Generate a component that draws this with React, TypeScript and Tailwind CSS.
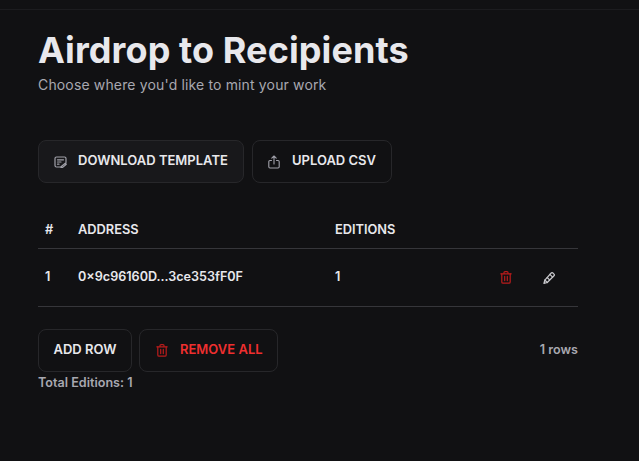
function NoteIcon() {
  return (
    <svg width="13" height="12" viewBox="0 0 13 12" fill="none" stroke="currentColor" strokeWidth="1.2" strokeLinecap="round" strokeLinejoin="round">
      <path d="M6.500 11H2.500A1.500 1.500 0 0 1 1 9.500v-7A1.500 1.500 0 0 1 2.500 1h8A1.500 1.500 0 0 1 12 2.500v4" />
      <path d="M3.500 3.800h6M3.500 6h3.500M3.500 8.200h1.500" />
      <path d="M7 10.800l4.300-3.600 1 1-3.600 3.200H7z" />
    </svg>
  );
}

function ShareIcon() {
  return (
    <svg width="12" height="14" viewBox="0 0 12 14" fill="none" stroke="currentColor" strokeWidth="1.1" strokeLinecap="round" strokeLinejoin="round">
      <path d="M3.500 5.500H2a1.200 1.200 0 0 0-1.200 1.200v5.100A1.200 1.200 0 0 0 2 13h8a1.200 1.200 0 0 0 1.200-1.200V6.700A1.200 1.200 0 0 0 10 5.500H8.500" />
      <path d="M6 9V1M3.800 3.200 6 1l2.200 2.200" />
    </svg>
  );
}

function TrashIcon() {
  return (
    <svg width="12" height="13" viewBox="0 0 12 13" fill="none" stroke="currentColor" strokeWidth="1.2" strokeLinecap="round" strokeLinejoin="round">
      <path d="M.8 2.800h10.400" />
      <path d="M4 2.600V1.600a1 1 0 0 1 1-1h2a1 1 0 0 1 1 1v1" />
      <path d="M1.800 2.800v8.100a1.300 1.300 0 0 0 1.300 1.300h5.800a1.300 1.300 0 0 0 1.300-1.300V2.800" />
      <path d="M4.700 5.400v4.200M7.300 5.400v4.200" />
    </svg>
  );
}

function PencilIcon() {
  return (
    <svg width="12" height="12" viewBox="0 0 13 13" fill="none" stroke="currentColor" strokeWidth="1.3" strokeLinecap="round" strokeLinejoin="round">
      <path d="M8.900 1.100a1.300 1.300 0 0 1 1.800 0l1.200 1.200a1.300 1.300 0 0 1 0 1.800L4.600 11.400l-3.600 1 1-3.700z" />
      <path d="M7.400 2.600l3 3M2 8.700l2.600 2.700M4.600 6l2.500 2.500" />
    </svg>
  );
}

export default function App() {
  return (
    <div className="h-[461px] w-[639px] overflow-hidden bg-[#111113] font-['Inter',sans-serif] text-[#e8e8ec]">
      <div className="h-[10px] border-b border-[#1c1c1f]" />

      <div className="pl-[38px] pr-[61px] pt-[15px]">
        <h1 className="text-[36px] font-bold leading-[50px] tracking-[0.1px]">Airdrop to Recipients</h1>
        <p className="text-sm leading-[20px] tracking-[0.15px] text-[#a8a8b0]">Choose where you'd like to mint your work</p>

        {/* Template buttons */}
        <div className="mt-[45px] flex gap-2">
          <button className="flex h-[43px] w-[206px] items-center gap-[11px] rounded-lg border border-[#27272a] bg-[#18181b] pl-[15px] text-[13px] font-semibold">
            <span className="text-[#a1a1aa]"><NoteIcon /></span>
            <span className="mb-[2px]">DOWNLOAD TEMPLATE</span>
          </button>
          <button className="flex h-[43px] w-[140px] items-center gap-[12px] rounded-lg border border-[#27272a] pl-[15px] text-[13px] font-semibold">
            <span className="text-[#a1a1aa]"><ShareIcon /></span>
            <span className="mb-[2px]">UPLOAD CSV</span>
          </button>
        </div>

        {/* Recipients table */}
        <div className="mt-[26px] font-semibold">
          <div className="flex h-[40px] items-center border-b border-[#36363a] pt-[2px] text-[12.800px]">
            <div className="w-[40px] pl-[7px]">#</div>
            <div className="w-[257px]">ADDRESS</div>
            <div>EDITIONS</div>
          </div>
          <div className="flex h-[58px] items-center border-b border-[#36363a] text-[12.600px]">
            <div className="w-[40px] pl-[7px]">1</div>
            <div className="w-[257px]">0×9c96160D...3ce353fF0F</div>
            <div className="flex-1">1</div>
            <div className="flex items-center gap-[31px] pr-[23px]">
              <span className="text-[#b91c1c]"><TrashIcon /></span>
              <span className="text-[#c8c8cc]"><PencilIcon /></span>
            </div>
          </div>
        </div>

        {/* Row actions */}
        <div className="mt-[22px] flex items-center gap-[7px] font-semibold">
          <button className="flex h-[43px] w-[94px] items-center justify-center rounded-lg border border-[#27272a] text-[13px]">
            <span className="mb-[2px]">ADD ROW</span>
          </button>
          <button className="flex h-[43px] w-[139px] items-center gap-[12px] rounded-lg border border-[#27272a] pl-[16px] text-[13px] text-[#ef2f2f]">
            <span className="text-[#b91c1c]"><TrashIcon /></span>
            <span className="mb-[2px]">REMOVE ALL</span>
          </button>
          <span className="ml-auto text-[12.600px] text-[#a8a8b0]">1 rows</span>
        </div>
        <p className="mt-[3px] text-[12.600px] font-semibold leading-[16px] text-[#a8a8b0]">Total Editions: 1</p>
      </div>
    </div>
  );
}
